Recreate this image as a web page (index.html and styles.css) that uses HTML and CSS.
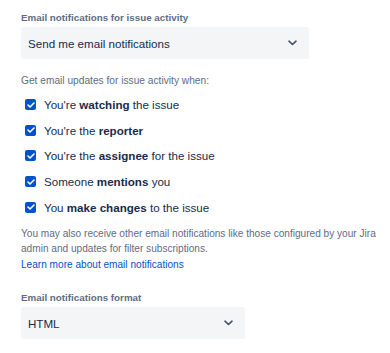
FILE: index.html
```html
<!DOCTYPE html>
<html lang="en">
<head>
    <meta charset="UTF-8">
    <meta name="viewport" content="width=device-width, initial-scale=1.0">
    <title>Email notifications</title>
    <link rel="stylesheet" href="styles.css">
</head>
<body>
    <div class="field">
        <label class="field-label">Email notifications for issue activity</label>
        <div class="select select-wide">
            <span>Send me email notifications</span>
            <svg class="chevron" width="9" height="6" viewBox="0 0 9 6"><path d="M1 1.2l3.5 3.3 3.5-3.3" fill="none" stroke="#42526e" stroke-width="1.6" stroke-linecap="round" stroke-linejoin="round"/></svg>
        </div>
    </div>

    <p class="hint">Get email updates for issue activity when:</p>

    <div class="checks">
        <div class="check-row"><span class="box"><svg width="8" height="6" viewBox="0 0 8 6"><path d="M1 3l2 2 4-4" fill="none" stroke="#fff" stroke-width="1.6" stroke-linecap="round" stroke-linejoin="round"/></svg></span><span>You're <b>watching</b> the issue</span></div>
        <div class="check-row"><span class="box"><svg width="8" height="6" viewBox="0 0 8 6"><path d="M1 3l2 2 4-4" fill="none" stroke="#fff" stroke-width="1.6" stroke-linecap="round" stroke-linejoin="round"/></svg></span><span>You're the <b>reporter</b></span></div>
        <div class="check-row"><span class="box"><svg width="8" height="6" viewBox="0 0 8 6"><path d="M1 3l2 2 4-4" fill="none" stroke="#fff" stroke-width="1.6" stroke-linecap="round" stroke-linejoin="round"/></svg></span><span>You're the <b>assignee</b> for the issue</span></div>
        <div class="check-row"><span class="box"><svg width="8" height="6" viewBox="0 0 8 6"><path d="M1 3l2 2 4-4" fill="none" stroke="#fff" stroke-width="1.6" stroke-linecap="round" stroke-linejoin="round"/></svg></span><span>Someone <b>mentions</b> you</span></div>
        <div class="check-row"><span class="box"><svg width="8" height="6" viewBox="0 0 8 6"><path d="M1 3l2 2 4-4" fill="none" stroke="#fff" stroke-width="1.6" stroke-linecap="round" stroke-linejoin="round"/></svg></span><span>You <b>make changes</b> to the issue</span></div>
    </div>

    <p class="note">You may also receive other email notifications like those configured by your Jira admin and updates for filter subscriptions.<br><a href="#" class="link">Learn more about email notifications</a></p>

    <div class="field field-format">
        <label class="field-label">Email notifications format</label>
        <div class="select select-narrow">
            <span>HTML</span>
            <svg class="chevron" width="9" height="6" viewBox="0 0 9 6"><path d="M1 1.2l3.5 3.3 3.5-3.3" fill="none" stroke="#42526e" stroke-width="1.6" stroke-linecap="round" stroke-linejoin="round"/></svg>
        </div>
    </div>
</body>
</html>
```

FILE: styles.css
```css
body {
    margin: 0;
    padding: 10px 0 0 21px;
    font-family: "Liberation Sans", Arial, sans-serif;
    color: #172b4d;
    background: #fff;
}

.field-label {
    display: block;
    font-size: 9.8px;
    line-height: 16px;
    font-weight: bold;
    color: #5e6c84;
}

.select {
    display: flex;
    align-items: center;
    justify-content: space-between;
    box-sizing: border-box;
    height: 32px;
    margin-top: 1px;
    padding: 0 12px 0 7px;
    background: #f4f5f7;
    border-radius: 3px;
    font-size: 11.6px;
}

.select-wide {
    width: 288px;
}

.select-narrow {
    width: 224px;
}

.hint {
    margin: 14px 0 0;
    font-size: 10.2px;
    line-height: 16px;
    color: #5e6c84;
}

.checks {
    margin-top: 3px;
}

.check-row {
    display: flex;
    align-items: center;
    height: 25.6px;
    font-size: 11.6px;
}

.box {
    display: flex;
    align-items: center;
    justify-content: center;
    width: 11px;
    height: 11px;
    margin: 0 8px 0 4px;
    background: #0052cc;
    border-radius: 2px;
}

.note {
    margin: 6px 0 0;
    font-size: 10.1px;
    line-height: 15.5px;
    color: #5e6c84;
}

.link {
    color: #0052cc;
    text-decoration: none;
}

.field-format {
    margin-top: 18px;
}
```
